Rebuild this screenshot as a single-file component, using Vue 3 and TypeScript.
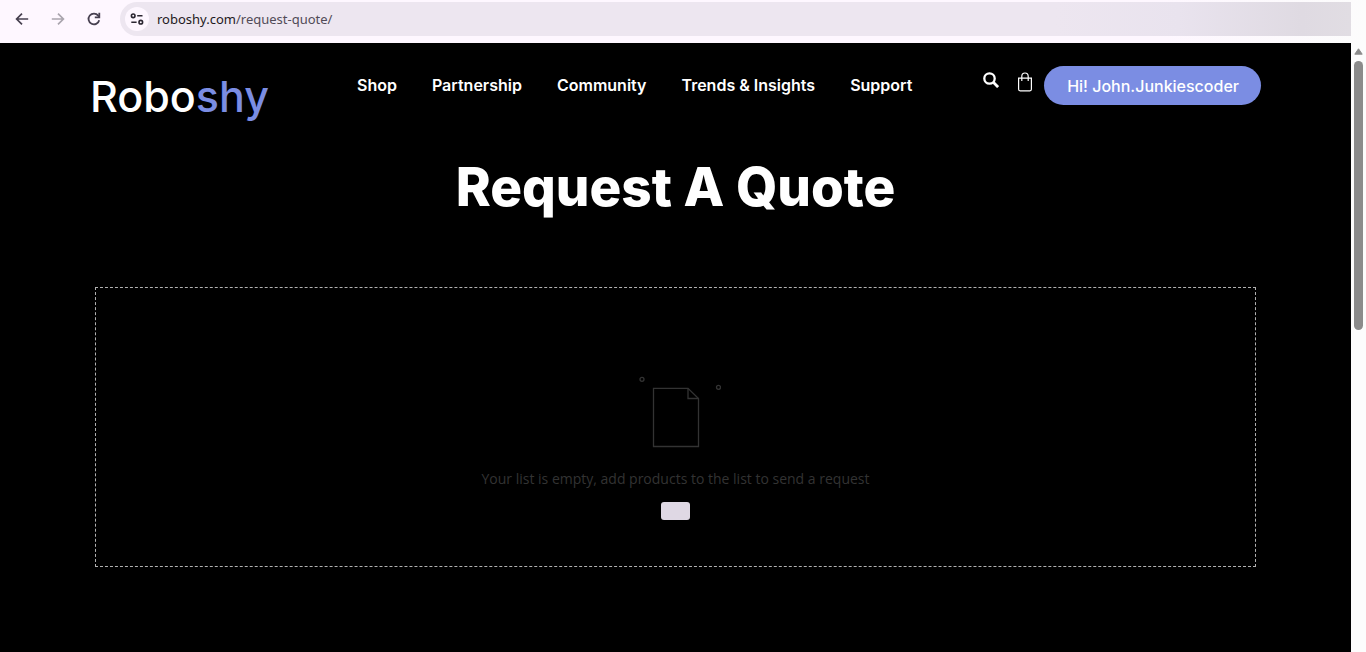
<script setup lang="ts">
import { ref } from 'vue'

interface NavItem {
  label: string
  href: string
}

const address = ref<string>('roboshy.com/request-quote/')
const domain = 'roboshy.com'
const navItems: NavItem[] = [
  { label: 'Shop', href: '#shop' },
  { label: 'Partnership', href: '#partnership' },
  { label: 'Community', href: '#community' },
  { label: 'Trends & Insights', href: '#trends' },
  { label: 'Support', href: '#support' },
]
</script>

<template>
  <div class="window">
    <div class="toolbar">
      <button class="tool" type="button" aria-label="Back">
        <svg width="16" height="16" viewBox="0 0 16 16" fill="none" stroke="#474050" stroke-width="1.7">
          <path d="M14.2 8H2.8M8 2.6 2.6 8 8 13.4" />
        </svg>
      </button>
      <button class="tool" type="button" aria-label="Forward">
        <svg width="16" height="16" viewBox="0 0 16 16" fill="none" stroke="#aaa5ae" stroke-width="1.7">
          <path d="M1.8 8h11.4M8 2.6 13.4 8 8 13.4" />
        </svg>
      </button>
      <button class="tool" type="button" aria-label="Reload">
        <svg width="16" height="16" viewBox="0 0 16 16" fill="none" stroke="#474050" stroke-width="1.8">
          <path d="M13.2 9.2A5.4 5.4 0 1 1 12.2 4.6L13.4 6" />
          <path d="M13.3 1.8v4.6H8.8" />
        </svg>
      </button>
      <div class="omnibox">
        <button class="site-info" type="button" aria-label="View site information">
          <svg width="14" height="14" viewBox="0 0 14 14" fill="none" stroke="#2b2631" stroke-width="1.6">
            <circle cx="3.2" cy="3.8" r="1.8" />
            <path d="M7.2 3.8h5.3M1.3 10.2h5.3" />
            <circle cx="10.8" cy="10.2" r="1.8" />
          </svg>
        </button>
        <a class="address" :href="'#' + address"><span class="domain">{{ domain }}</span>{{ address.slice(domain.length) }}</a>
      </div>
    </div>

    <div class="viewport">
      <div class="page">
        <header class="header">
          <a class="logo" href="#home">Robo<span>shy</span></a>
          <nav class="nav" aria-label="Main">
            <a v-for="item in navItems" :key="item.label" :href="item.href">{{ item.label }}</a>
          </nav>
          <div class="actions">
            <button class="search" type="button" aria-label="Search">
              <svg width="16" height="16" viewBox="0 0 16 16" fill="none" stroke="#fff">
                <circle cx="6.5" cy="6.5" r="5.2" stroke-width="2.3" />
                <path d="m10.3 10.3 4.8 4.8" stroke-width="2.8" />
              </svg>
            </button>
            <button class="bag" type="button" aria-label="Cart">
              <svg width="16" height="20" viewBox="0 0 16 20" fill="none" stroke="#fff" stroke-width="1.2">
                <path d="M1.6 6.1h12.8v11.2c0 .9-.6 1.5-1.5 1.5H3.1c-.9 0-1.5-.6-1.5-1.5z" />
                <path d="M4.8 9V4.4C4.8 2.3 6.2 1 8 1s3.2 1.3 3.2 3.4V9" />
              </svg>
            </button>
            <button class="account" type="button">Hi! John.Junkiescoder</button>
          </div>
        </header>

        <main class="main">
          <h1>Request A Quote</h1>
          <section class="empty">
            <svg width="90" height="72" viewBox="-6 0 90 72" fill="none" stroke="#333" stroke-width="1.3">
              <circle cx="5" cy="3.3" r="2" />
              <circle cx="81.5" cy="11.3" r="2" />
              <path d="M16.5 12.3H51L61.5 22.5V70.5H16.5z" />
              <path d="M51 12.3V22.5H61.5" />
            </svg>
            <p>Your list is empty, add products to the list to send a request</p>
            <button class="blank" type="button" aria-label="Return to shop"></button>
          </section>
        </main>
      </div>

      <div class="scrollbar" aria-hidden="true">
        <svg width="9" height="7" viewBox="0 0 9 7">
          <path d="M4.5 .8 8.2 6.2H.8z" fill="#8b8b8b" stroke="#8b8b8b" stroke-linejoin="round" />
        </svg>
        <div class="thumb"></div>
      </div>
    </div>
  </div>
</template>

<style>
body {
  margin: 0;
  background: #000;
}
</style>

<style scoped>
* {
  box-sizing: border-box;
}

.window {
  display: flex;
  flex-direction: column;
  min-height: 100vh;
}

button {
  padding: 0;
  border: 0;
  background: none;
  font: inherit;
  cursor: pointer;
}

a {
  color: inherit;
  text-decoration: none;
}

svg {
  display: block;
}

.toolbar {
  display: flex;
  align-items: center;
  height: 43px;
  padding: 0 15px 5px 14px;
  background: linear-gradient(90deg, #fef7ff 85%, #fcfcfc);
}

.tool {
  width: 16px;
  margin-right: 20px;
}

.omnibox {
  display: flex;
  flex: 1;
  align-items: center;
  gap: 8px;
  height: 34px;
  margin-left: -2px;
  padding-left: 5px;
  border-radius: 17px 0 0 17px;
  background: linear-gradient(90deg, #ede6f0 76%, #e9e3ee 86%, #dfdae2 96%, #e1dde3);
}

.site-info {
  display: grid;
  place-items: center;
  width: 24px;
  height: 24px;
  border-radius: 50%;
  background: #fef7ff;
}

.address {
  color: #514b57;
  font: 13px/20px "Noto Sans", "Open Sans", sans-serif;
}

.domain {
  color: #1e1a22;
}

.viewport {
  display: flex;
  flex: 1;
}

.page {
  flex: 1;
  padding: 23px 90px 0;
  background: #000;
  color: #fff;
  font-family: Inter, "Liberation Sans", sans-serif;
}

.header {
  display: flex;
  align-items: flex-start;
}

.logo {
  width: 267px;
  padding-top: 2px;
  font: 500 43px/56px Inter, sans-serif;
}

.logo span {
  color: #7b8de3;
}

.nav {
  display: flex;
  gap: 35px;
  font-size: 16px;
  font-weight: 600;
  line-height: 39px;
  white-space: nowrap;
}

.actions {
  display: flex;
  align-items: flex-start;
  margin-left: auto;
}

.search {
  margin: 6px 18px 0 0;
}

.bag {
  margin: 6px 11px 0 0;
}

.account {
  height: 39px;
  padding: 0 22px 0 23px;
  border-radius: 20px;
  background: #7b8de3;
  color: #fff;
  font-size: 16px;
  font-weight: 500;
  white-space: nowrap;
}

.main {
  padding: 0 5px;
  text-align: center;
}

h1 {
  margin: 29px 0 66px;
  font-size: 53px;
  font-weight: 800;
  line-height: 68px;
}

.empty {
  display: flex;
  flex-direction: column;
  align-items: center;
  height: 280px;
  padding-top: 88px;
  border: 1px dashed #b0b0b0;
}

.empty p {
  margin: 21px 0 13px;
  color: #333;
  font: 14px/20px "Open Sans", "Noto Sans", sans-serif;
}

.blank {
  width: 29px;
  height: 18px;
  border-radius: 3px;
  background: #dfd8e4;
}

.scrollbar {
  display: flex;
  flex-direction: column;
  align-items: center;
  gap: 6px;
  width: 15px;
  padding-top: 5px;
  background: #fcfcfc;
}

.thumb {
  width: 9px;
  height: 269px;
  border-radius: 5px;
  background: #8b8b8b;
}
</style>
